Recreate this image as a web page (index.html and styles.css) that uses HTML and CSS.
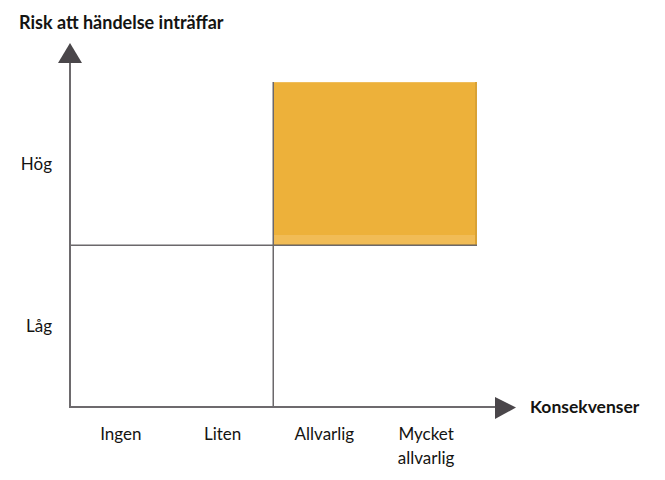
FILE: index.html
```html
<!DOCTYPE html>
<html lang="sv">
<head>
<meta charset="utf-8">
<title>Riskmatris</title>
<link rel="stylesheet" href="styles.css">
</head>
<body>
<h1 class="title">Risk att händelse inträffar</h1>
<div class="chart">
  <div class="ylabels">
    <span class="ylabel">Hög</span>
    <span class="ylabel">Låg</span>
  </div>
  <svg class="axes" width="462" height="380" viewBox="56 40 462 380" xmlns="http://www.w3.org/2000/svg">
    <rect x="274" y="82" width="203" height="163" fill="#EDB13A"/>
    <rect x="274" y="82" width="203" height="1" fill="#F0BE5C"/>
    <rect x="274" y="235" width="202" height="9" fill="#F1BC56"/>
    <rect x="475" y="82" width="2" height="163" fill="#D9A235"/>
    <line x1="70" y1="245.25" x2="477" y2="245.25" stroke="#6b686b" stroke-width="1.5"/>
    <line x1="273.25" y1="82" x2="273.25" y2="407" stroke="#6b686b" stroke-width="1.5"/>
    <line x1="70" y1="62" x2="70" y2="408" stroke="#6d6a6d" stroke-width="2"/>
    <line x1="69" y1="407" x2="496" y2="407" stroke="#6d6a6d" stroke-width="2"/>
    <polygon points="70,43 58,63 82,63" fill="#4a464a"/>
    <polygon points="516,407.5 495,397 495,419" fill="#4a464a"/>
  </svg>
  <div class="xtitle">Konsekvenser</div>
  <div class="xlabels">
    <span class="xlabel">Ingen</span>
    <span class="xlabel">Liten</span>
    <span class="xlabel">Allvarlig</span>
    <span class="xlabel">Mycket<br>allvarlig</span>
  </div>
</div>
</body>
</html>
```
FILE: styles.css
```css
html, body {
  margin: 0;
  padding: 0;
  background: #ffffff;
}

body {
  width: 665px;
  height: 480px;
  overflow: hidden;
  font-family: Lato, "Open Sans", "Liberation Sans", sans-serif;
  color: #141412;
}

.title {
  margin: 0;
  padding: 11px 0 0 19px;
  font-size: 18px;
  line-height: 22px;
  font-weight: 700;
}

.chart {
  margin-top: 7px;
  display: grid;
  grid-template-columns: 56px 462px auto;
  grid-template-rows: 380px auto;
}

.ylabels {
  grid-column: 1;
  grid-row: 1;
  display: grid;
  grid-template-rows: 163px 162px;
  padding-top: 42px;
  padding-right: 4px;
  justify-items: end;
  align-items: center;
}

.ylabel {
  font-size: 17px;
  line-height: 20px;
}

.axes {
  grid-column: 2;
  grid-row: 1;
  display: block;
}

.xtitle {
  grid-column: 3;
  grid-row: 1;
  align-self: end;
  margin-bottom: 3px;
  padding-left: 12px;
  font-size: 17.5px;
  line-height: 20px;
  font-weight: 700;
  white-space: nowrap;
}

.xlabels {
  grid-column: 2;
  grid-row: 2;
  display: grid;
  grid-template-columns: repeat(4, 101.75px);
  padding-left: 14px;
  margin-top: 2px;
}

.xlabel {
  text-align: center;
  font-size: 17px;
  line-height: 24px;
}
```
